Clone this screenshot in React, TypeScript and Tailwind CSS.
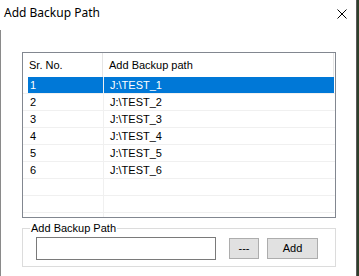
import React from "react";

const rows = ["J:\\TEST_1", "J:\\TEST_2", "J:\\TEST_3", "J:\\TEST_4", "J:\\TEST_5", "J:\\TEST_6", "", ""];

export default function App() {
  const body = { fontFamily: '"Liberation Sans", Arial, sans-serif' };
  const title = { fontFamily: '"Noto Sans", "Open Sans", sans-serif' };
  return (
    <div className="w-[359px] h-[276px] bg-white flex overflow-hidden text-black" style={body}>
      <div className="w-[356px] h-full flex flex-col">
        <div className="h-[30px] flex items-center justify-between pl-[4px] pr-[9px] pb-[4px] shrink-0">
          <span className="text-[12px] leading-none" style={title}>Add Backup Path</span>
          <svg width="10" height="10" viewBox="0 0 10 10" className="mt-[1px]">
            <path d="M0.5 0.5 L9.5 9.5 M9.5 0.5 L0.5 9.5" stroke="#000" strokeWidth="1" />
          </svg>
        </div>
        <div className="flex-1 border-l border-[#8a8a8a] pl-[21px] pt-[22px]">
          <div className="w-[314px] h-[166px] border border-[#828790] flex flex-col overflow-hidden text-[11px]">
            <div className="h-[24px] flex shrink-0">
              <div className="w-[80px] border-r border-[#e5e5e5] flex items-center pl-[6px]">Sr. No.</div>
              <div className="flex-1 flex items-center pl-[6px] border-r border-[#e5e5e5] mr-[1px]">Add Backup path</div>
            </div>
            {rows.map((r, i) => {
              const sel = i === 0;
              return (
                <div key={i} className="h-[17px] flex shrink-0 border-b border-[#f0f0f0]">
                  {sel ? (
                    <div className="w-[75px] ml-[5px] pl-[2px] flex items-center bg-[#0078d7] text-white">1</div>
                  ) : (
                    <div className="w-[80px] pl-[7px] flex items-center">{r ? String(i + 1) : ""}</div>
                  )}
                  <div className="w-[1px] bg-[#f0f0f0]" />
                  <div className={`flex-1 flex items-center pl-[6px] mr-[1px] ${sel ? "bg-[#0078d7] text-white" : ""}`}>{r}</div>
                </div>
              );
            })}
            <div className="flex-1 flex">
              <div className="w-[80px]" />
              <div className="w-[1px] bg-[#f0f0f0]" />
            </div>
          </div>
          <fieldset className="w-[314px] h-[46px] mt-[3px] border border-[#dcdcdc] flex">
            <legend className="text-[11px] leading-[14px] ml-[7px] px-[1px]">Add Backup Path</legend>
            <div className="flex items-start mt-[2px] ml-[13px]">
              <div className="w-[180px] h-[23px] border border-[#7a7a7a] bg-white" />
              <button className="ml-[13px] mt-[1px] w-[30px] h-[21px] bg-[#e1e1e1] border border-[#adadad] text-[11px] leading-none flex items-center justify-center">---</button>
              <button className="ml-[8px] mt-[1px] w-[51px] h-[21px] bg-[#e1e1e1] border border-[#adadad] text-[11px] leading-none flex items-center justify-center">Add</button>
            </div>
          </fieldset>
        </div>
      </div>
      <div className="w-[1px] h-full bg-[#5a5a5a]" />
      <div className="w-[2px] h-full bg-[#2e3f2a]" />
    </div>
  );
}
